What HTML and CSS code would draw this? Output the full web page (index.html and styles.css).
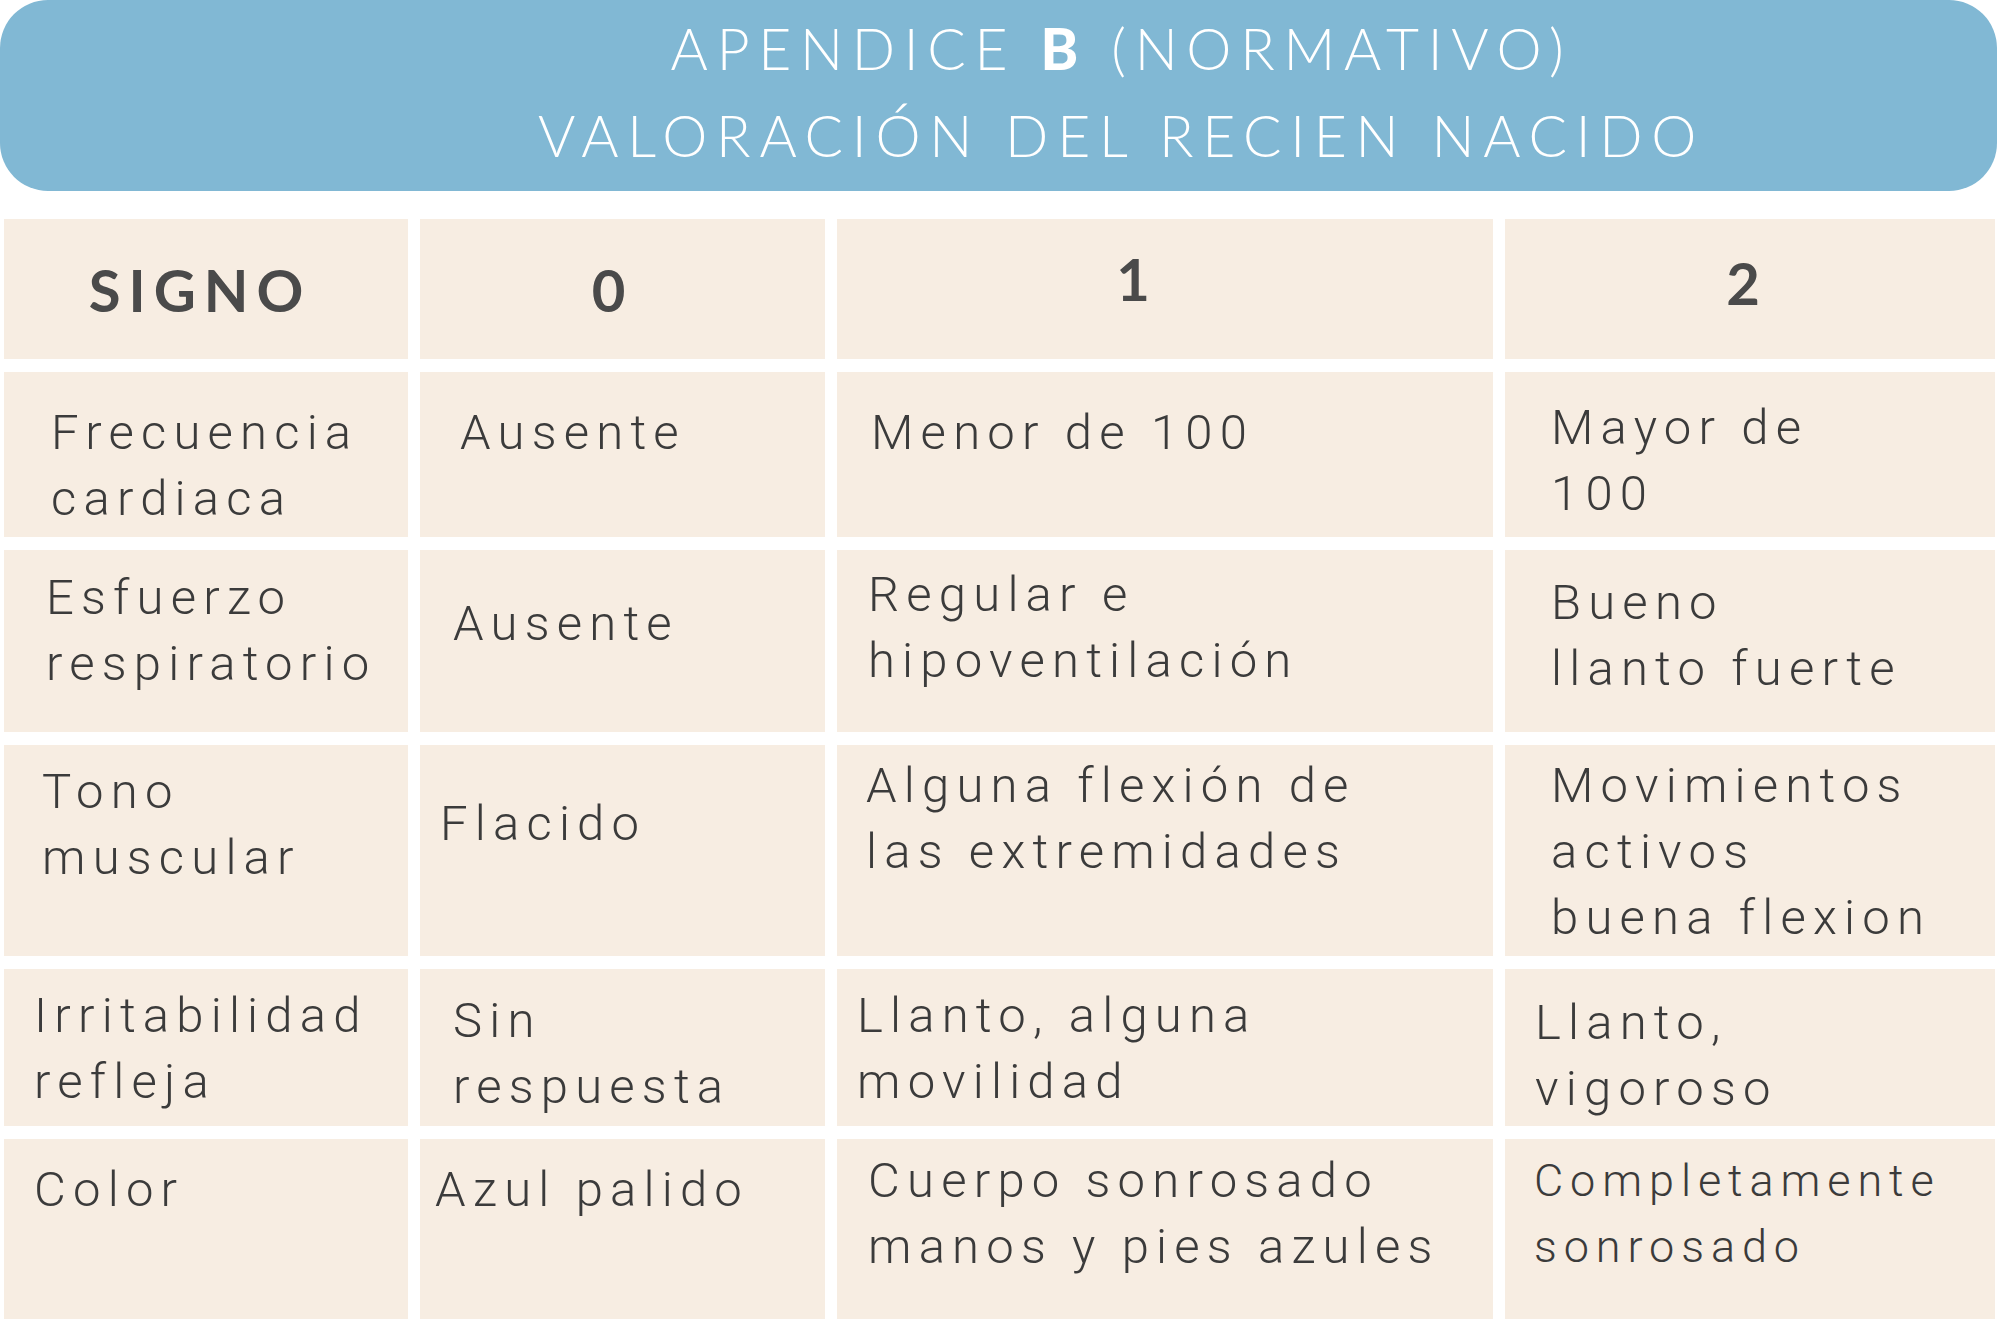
FILE: index.html
```html
<!DOCTYPE html>
<html lang="es">
<head>
<meta charset="utf-8">
<title>Apendice B - Valoración del recien nacido</title>
<link rel="stylesheet" href="styles.css">
</head>
<body>
<header class="banner">
  <h1 class="title">
    <span class="title-line">APENDICE <b>B</b> (NORMATIVO)</span>
    <span class="title-line">VALORACIÓN DEL RECIEN NACIDO</span>
  </h1>
</header>
<main class="apgar">
  <div class="cell head hc1">SIGNO</div>
  <div class="cell head hc2">0</div>
  <div class="cell head hc3">1</div>
  <div class="cell head hc4">2</div>

  <div class="cell r1c1">Frecuencia<br>cardiaca</div>
  <div class="cell r1c2">Ausente</div>
  <div class="cell r1c3">Menor de 100</div>
  <div class="cell r1c4">Mayor de<br>100</div>

  <div class="cell r2c1">Esfuerzo<br>respiratorio</div>
  <div class="cell r2c2">Ausente</div>
  <div class="cell r2c3">Regular e<br>hipoventilación</div>
  <div class="cell r2c4">Bueno<br>llanto fuerte</div>

  <div class="cell r3c1">Tono<br>muscular</div>
  <div class="cell r3c2">Flacido</div>
  <div class="cell r3c3">Alguna flexión de<br>las extremidades</div>
  <div class="cell r3c4">Movimientos<br>activos<br>buena flexion</div>

  <div class="cell r4c1">Irritabilidad<br>refleja</div>
  <div class="cell r4c2">Sin<br>respuesta</div>
  <div class="cell r4c3">Llanto, alguna<br>movilidad</div>
  <div class="cell r4c4">Llanto,<br>vigoroso</div>

  <div class="cell r5c1">Color</div>
  <div class="cell r5c2">Azul palido</div>
  <div class="cell r5c3">Cuerpo sonrosado<br>manos y pies azules</div>
  <div class="cell r5c4 small">Completamente<br>sonrosado</div>
</main>
</body>
</html>
```

FILE: styles.css
```css
html, body {
  margin: 0;
  padding: 0;
  background: #ffffff;
}

body {
  width: 1997px;
  font-family: Roboto, "Liberation Sans", sans-serif;
}

.banner {
  height: 191px;
  box-sizing: border-box;
  background: #81b8d4;
  border-radius: 48px;
  padding: 5px 0 0 246px;
}

.title {
  margin: 0;
  font-family: Lato, "Liberation Sans", sans-serif;
  font-weight: 300;
  font-size: 57px;
  line-height: 87px;
  letter-spacing: 8.7px;
  color: #ffffff;
  text-align: center;
}

.title b {
  font-weight: 900;
}

.title-line {
  display: block;
  white-space: nowrap;
}

.apgar {
  display: grid;
  grid-template-columns: 404px 405px 656px 490px;
  grid-template-rows: 140px 165px 182px 211px 157px 180px;
  column-gap: 12px;
  row-gap: 13px;
  margin: 28px 0 0 4px;
}

.cell {
  background: #f7ede2;
  color: #3b3b3b;
  font-weight: 300;
  font-size: 49px;
  line-height: 66px;
  letter-spacing: 7.2px;
  white-space: nowrap;
  box-sizing: border-box;
}

.cell.small {
  font-size: 45px;
  letter-spacing: 6.9px;
}

.head {
  display: flex;
  align-items: center;
  justify-content: center;
  font-family: Lato, "Liberation Sans", sans-serif;
  font-weight: 700;
  font-size: 58px;
  letter-spacing: 8px;
  color: #4a4a4a;
}

.hc1 { padding: 2px 12px 0 0; }
.hc2 { padding: 2px 20px 0 0; }
.hc3 { padding: 0 56px 20px 0; }
.hc4 { padding: 0 6px 12px 0; }

.r1c1 { padding: 28px 0 0 47px; }
.r1c2 { padding: 28px 0 0 40px; }
.r1c3 { padding: 28px 0 0 34px; }
.r1c4 { padding: 23px 0 0 46px; }

.r2c1 { padding: 15px 0 0 42px; }
.r2c2 { padding: 41px 0 0 33px; }
.r2c3 { padding: 12px 0 0 31px; }
.r2c4 { padding: 20px 0 0 46px; }

.r3c1 { padding: 14px 0 0 38px; }
.r3c2 { padding: 46px 0 0 20px; }
.r3c3 { padding: 8px 0 0 29px; }
.r3c4 { padding: 8px 0 0 46px; }

.r4c1 { padding: 14px 0 0 30px; }
.r4c2 { padding: 19px 0 0 33px; }
.r4c3 { padding: 14px 0 0 20px; }
.r4c4 { padding: 21px 0 0 30px; }

.r5c1 { padding: 18px 0 0 30px; }
.r5c2 { padding: 18px 0 0 15px; }
.r5c3 { padding: 9px 0 0 31px; }
.r5c4 { padding: 9px 0 0 29px; }
```
